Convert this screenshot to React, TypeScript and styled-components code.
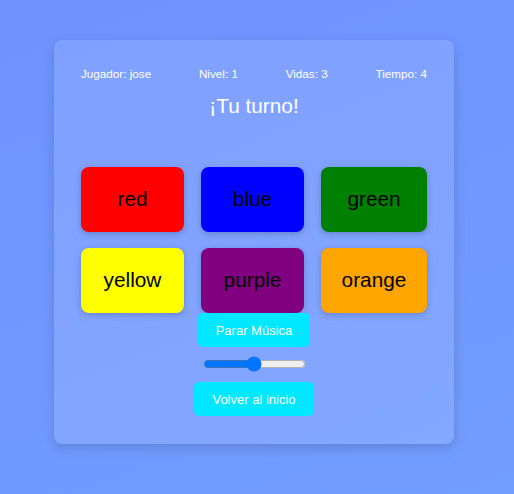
import React, { useState } from "react";
import styled, { createGlobalStyle } from "styled-components";

const Global = createGlobalStyle`
  html, body { margin: 0; padding: 0; }
  body {
    font-family: "Liberation Sans", Arial, sans-serif;
    background: linear-gradient(160deg, #6e92ff 0%, #729dff 100%);
    min-height: 494px;
  }
`;

const Page = styled.div`
  display: flex;
  align-items: flex-start;
  padding: 40px 0 0 54px;
  min-height: 494px;
  box-sizing: border-box;
`;

const Card = styled.div`
  width: 400px;
  box-sizing: border-box;
  padding: 27px 27px 28px;
  background: rgba(255, 255, 255, 0.12);
  border-radius: 8px;
  box-shadow: 0 4px 12px rgba(0, 0, 0, 0.15);
  display: flex;
  flex-direction: column;
  align-items: center;
  color: #fff;
`;

const Stats = styled.div`
  align-self: stretch;
  display: flex;
  justify-content: space-between;
  font-size: 11.7px;
  line-height: 14px;
  margin-bottom: 13px;
`;

const Title = styled.h2`
  margin: 0 0 50px;
  font-size: 20.8px;
  line-height: 23px;
  font-weight: normal;
`;

const Grid = styled.div`
  display: grid;
  grid-template-columns: 103px 103px 106px;
  column-gap: 17px;
  row-gap: 16px;
  align-self: stretch;
`;

const ColorButton = styled.button<{ $bg: string }>`
  height: 65px;
  border: none;
  border-radius: 8px;
  background: ${(p) => p.$bg};
  color: #000;
  font-family: "Liberation Sans", Arial, sans-serif;
  font-size: 20.8px;
  box-shadow: 0 2px 6px rgba(0, 0, 0, 0.2);
  cursor: pointer;
  padding: 0 0 2px;
`;

const ActionButton = styled.button`
  height: 34px;
  padding: 0 18px;
  border: none;
  border-radius: 5px;
  background: #00e8ff;
  color: #fff;
  font-family: "Liberation Sans", Arial, sans-serif;
  font-size: 13px;
  cursor: pointer;
`;

const Slider = styled.input`
  width: 103px;
  margin: 9px 0 10px;
`;

const colors = [
  { name: "red", bg: "#ff0000" },
  { name: "blue", bg: "#0000ff" },
  { name: "green", bg: "#008000" },
  { name: "yellow", bg: "#ffff00" },
  { name: "purple", bg: "#800080" },
  { name: "orange", bg: "#ffa500" },
];

export default function App() {
  const [vol, setVol] = useState(50);
  return (
    <>
      <Global />
      <Page>
        <Card>
          <Stats>
            <span>Jugador: jose</span>
            <span>Nivel: 1</span>
            <span>Vidas: 3</span>
            <span>Tiempo: 4</span>
          </Stats>
          <Title>¡Tu turno!</Title>
          <Grid>
            {colors.map((c) => (
              <ColorButton key={c.name} $bg={c.bg}>
                {c.name}
              </ColorButton>
            ))}
          </Grid>
          <ActionButton>Parar Música</ActionButton>
          <Slider
            type="range"
            min={0}
            max={100}
            value={vol}
            onChange={(e) => setVol(Number(e.target.value))}
          />
          <ActionButton>Volver al inicio</ActionButton>
        </Card>
      </Page>
    </>
  );
}
